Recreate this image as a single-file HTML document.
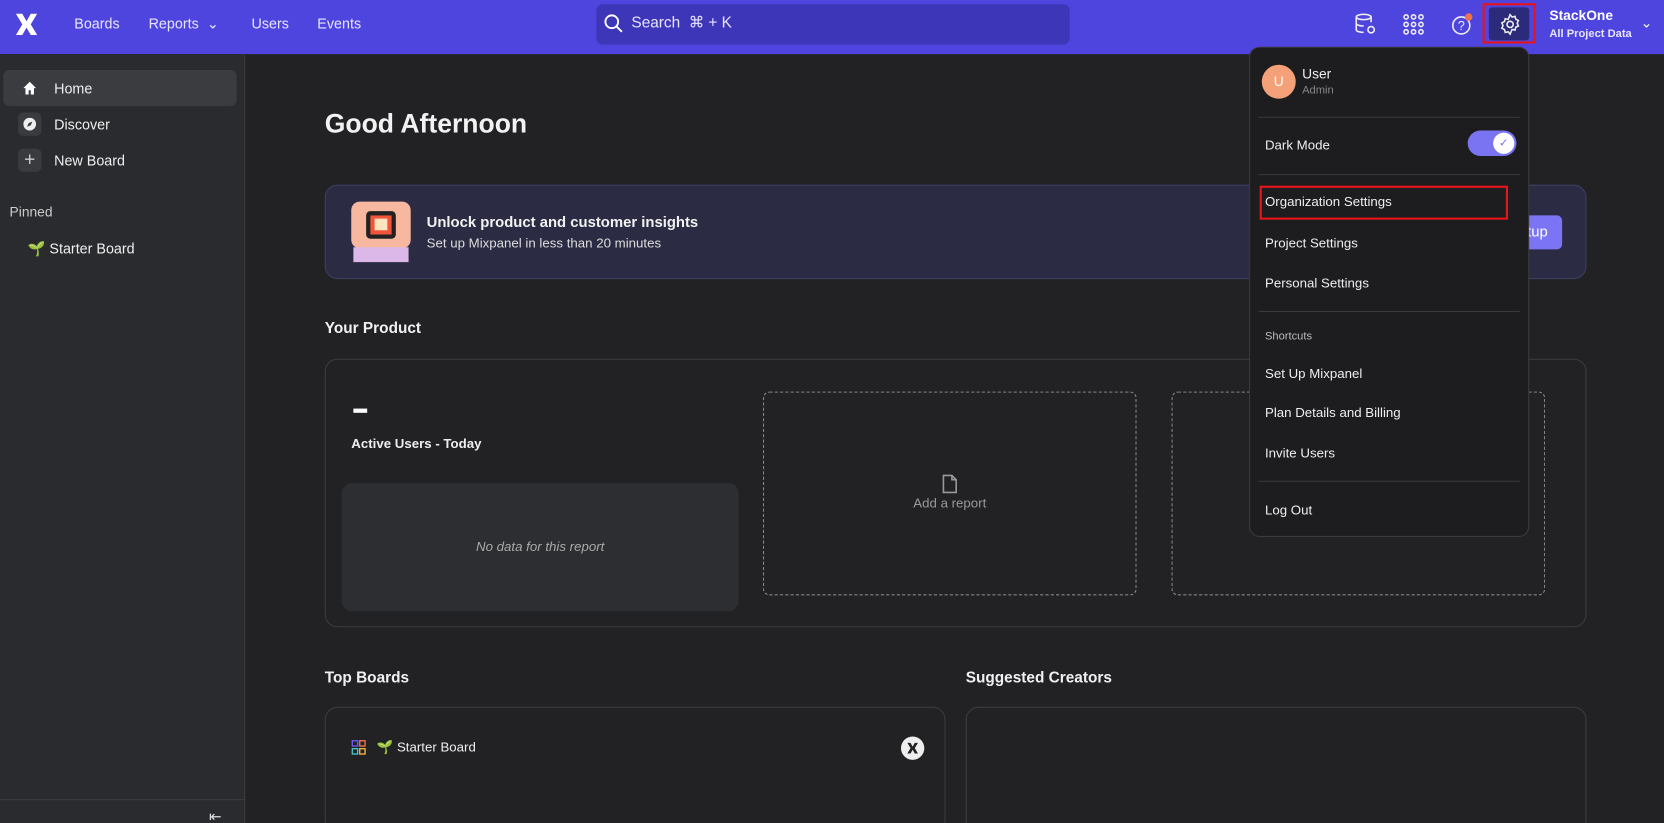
<!DOCTYPE html>
<html><head><meta charset="utf-8"><style>
*{box-sizing:border-box;margin:0;padding:0}
html,body{width:1664px;height:823px;overflow:hidden;background:#222225}
body{font-family:"Liberation Sans",sans-serif;color:#eee;position:relative}
#w{position:absolute;left:0;top:0;width:1568px;height:776px;transform:scale(1.06122);transform-origin:0 0;overflow:hidden}
.top{position:absolute;left:0;top:0;width:1568px;height:51px;background:#4e44de}
.nav{position:absolute;top:15px;font-size:13.5px;color:#e8e6ff}
.search{position:absolute;left:562px;top:4px;width:446px;height:38px;background:#3e36b8;border-radius:6px;color:#e8e6ff;font-size:14.5px;padding:10px 0 0 33px}
.side{position:absolute;left:0;top:51px;width:231px;height:725px;background:#2a2b2e;border-right:1px solid #3a3b3e}
.si{position:absolute;left:51px;font-size:13.5px;color:#eee}
.ib{position:absolute;left:17px;width:22px;height:22px;background:#3a3b3f;border-radius:5px}
.h2{position:absolute;font-size:14.5px;font-weight:bold;color:#f0f0f0}
.card{position:absolute;border:1px solid #3b3c40;border-radius:12px}
.dash{position:absolute;border:1px dashed #8a8a8e;border-radius:6px}
.menu{position:absolute;left:1177px;top:44px;width:264px;height:462px;background:#1d1d20;border:1px solid #3a3a3e;border-radius:10px}
.mi{position:absolute;left:14px;font-size:12.5px;color:#eee}
.sep{position:absolute;left:8px;width:246px;height:1px;background:#3a3a3e}
</style></head><body><div id="w">
<div class="top">
 <svg style="position:absolute;left:13px;top:11px" width="24" height="24" viewBox="0 0 24 24"><path d="M2 2h6l4 7 4-7h6l-6 10 6 10h-6l-4-7-4 7H2l6-10z" fill="#fff"/></svg>
 <div class="nav" style="left:70px">Boards</div>
 <div class="nav" style="left:140px">Reports &nbsp;⌄</div>
 <div class="nav" style="left:237px">Users</div>
 <div class="nav" style="left:299px">Events</div>
 <div class="search"><svg style="position:absolute;left:7px;top:9px" width="18" height="18" viewBox="0 0 18 18"><circle cx="7.5" cy="7.5" r="6" stroke="#fff" stroke-width="1.8" fill="none"/><path d="M12 12l5 5" stroke="#fff" stroke-width="1.8"/></svg>Search &nbsp;⌘ + K</div>
 <svg style="position:absolute;left:1276px;top:12px" width="22" height="22" viewBox="0 0 22 22" fill="none" stroke="#eee" stroke-width="1.5"><ellipse cx="9" cy="4" rx="7" ry="2.5"/><path d="M2 4v12c0 1.4 3 2.5 7 2.5M16 4v5M2 10c0 1.4 3 2.5 7 2.5"/><circle cx="16" cy="16" r="3"/></svg>
 <svg style="position:absolute;left:1322px;top:13px" width="20" height="20" viewBox="0 0 20 20" fill="none" stroke="#eee" stroke-width="1.5"><circle cx="3" cy="3" r="2"/><circle cx="10" cy="3" r="2"/><circle cx="17" cy="3" r="2"/><circle cx="3" cy="10" r="2"/><circle cx="10" cy="10" r="2"/><circle cx="17" cy="10" r="2"/><circle cx="3" cy="17" r="2"/><circle cx="10" cy="17" r="2"/><circle cx="17" cy="17" r="2"/></svg>
 <svg style="position:absolute;left:1367px;top:12px" width="22" height="22" viewBox="0 0 22 22"><circle cx="10" cy="12" r="8" stroke="#eee" stroke-width="1.5" fill="none"/><text x="10" y="16.5" font-size="12" text-anchor="middle" fill="#eee" font-family="Liberation Sans">?</text><circle cx="17" cy="4" r="3.5" fill="#f0714a"/></svg>
 <div style="position:absolute;left:1397px;top:3px;width:50px;height:38px;border:2px solid #e8141c"><div style="position:absolute;left:4px;top:2px;width:38px;height:31px;background:#2c2a7a;border-radius:3px"></div>
 <svg style="position:absolute;left:13px;top:7px" width="22" height="22" viewBox="0 0 24 24" fill="none" stroke="#eee" stroke-width="1.6"><circle cx="12" cy="12" r="3.2"/><path d="M12 2l2 2.5 3-.8.8 3 2.7 1.3-1.2 2.8 1.2 2.8-2.7 1.3-.8 3-3-.8L12 22l-2-2.5-3 .8-.8-3-2.7-1.3 1.2-2.8-1.2-2.8 2.7-1.3.8-3 3 .8z"/></svg></div>
 <div style="position:absolute;left:1460px;top:7px;font-size:13px;font-weight:bold;color:#fff">StackOne</div>
 <div style="position:absolute;left:1460px;top:26px;font-size:10.5px;font-weight:bold;color:#e8e6ff">All Project Data</div>
 <div style="position:absolute;left:1546px;top:14px;font-size:13px;color:#fff">⌄</div>
</div>
<div class="side">
 <div style="position:absolute;left:3px;top:15px;width:220px;height:34px;background:#3b3c40;border-radius:6px"></div>
 <svg style="position:absolute;left:21px;top:25px" width="14" height="14" viewBox="0 0 14 14"><path d="M7 1L1 7h2v6h3v-4h2v4h3V7h2z" fill="#fff"/></svg>
 <div class="si" style="top:25px">Home</div>
 <div class="ib" style="top:55px"><svg style="position:absolute;left:5px;top:5px" width="12" height="12"><circle cx="6" cy="6" r="6" fill="#eee"/><path d="M8.5 3.5L5 5 3.5 8.5 7 7z" fill="#3a3b3f"/></svg></div>
 <div class="si" style="top:59px">Discover</div>
 <div class="ib" style="top:89px;color:#ccc;font-size:18px;text-align:center;line-height:21px">+</div>
 <div class="si" style="top:93px">New Board</div>
 <div style="position:absolute;left:9px;top:141px;font-size:13px;color:#ccc">Pinned</div>
 <div class="si" style="left:26px;top:176px"><span style="color:#5db53b">🌱</span> Starter Board</div>
 <div style="position:absolute;left:0;top:702px;width:231px;height:1px;background:#3a3b3e"></div>
 <div style="position:absolute;left:197px;top:710px;font-size:14px;color:#ddd">⇤</div>
</div>
<div style="position:absolute;left:306px;top:103px;font-size:25px;font-weight:bold;color:#f2f2f2">Good Afternoon</div>
<div class="card" style="left:306px;top:174px;width:1189px;height:89px;background:#2b2c43;border-color:#3d3e60">
 <div style="position:absolute;left:24px;top:15px;width:56px;height:44px;background:#f8b8a0;border-radius:8px"><div style="position:absolute;left:14px;top:9px;width:28px;height:26px;background:#222;border-radius:4px"><div style="position:absolute;left:4px;top:4px;width:20px;height:18px;background:#f0543a"><div style="position:absolute;left:4px;top:3px;width:12px;height:11px;background:#ffe4c0"></div></div></div></div>
 <div style="position:absolute;left:26px;top:58px;width:52px;height:14px;background:#dcb8e8"></div>
 <div style="position:absolute;left:95px;top:26px;font-size:14px;font-weight:bold;color:#f2f2f2">Unlock product and customer insights</div>
 <div style="position:absolute;left:95px;top:47px;font-size:12.5px;color:#ddd">Set up Mixpanel in less than 20 minutes</div>
 <div style="position:absolute;left:1100px;top:28px;width:65px;height:32px;background:#7b75f5;border-radius:5px;color:#fff;font-size:14px;padding:7px 0 0 32px">tup</div>
</div>
<div class="h2" style="left:306px;top:302px">Your Product</div>
<div class="card" style="left:306px;top:338px;width:1189px;height:253px">
 <div style="position:absolute;left:26px;top:46px;width:13px;height:4px;background:#fff"></div>
 <div style="position:absolute;left:24px;top:72px;font-size:12.5px;font-weight:bold;color:#eee">Active Users - Today</div>
 <div style="position:absolute;left:15px;top:116px;width:374px;height:121px;background:#2d2e31;border-radius:10px;text-align:center;padding-top:53px;font-size:12.5px;font-style:italic;color:#aaa">No data for this report</div>
</div>
<div class="dash" style="left:719px;top:369px;width:352px;height:192px"><svg style="position:absolute;left:167px;top:77px" width="16" height="18" viewBox="0 0 16 18" fill="none" stroke="#999" stroke-width="1.5"><path d="M2 1h8l4 4v12H2zM10 1v4h4"/></svg><div style="position:absolute;width:100%;top:97px;text-align:center;font-size:12.5px;color:#999">Add a report</div></div>
<div class="dash" style="left:1104px;top:369px;width:352px;height:192px"></div>
<div class="h2" style="left:306px;top:631px">Top Boards</div>
<div class="h2" style="left:910px;top:631px">Suggested Creators</div>
<div class="card" style="left:306px;top:666px;width:585px;height:120px">
 <svg style="position:absolute;left:24px;top:30px" width="14" height="15" viewBox="0 0 14 15" fill="none" stroke-width="1.3"><rect x="1" y="1" width="5" height="5" stroke="#6a5cf0"/><rect x="8" y="1" width="5" height="5" stroke="#f0714a"/><rect x="1" y="8.5" width="5" height="5" stroke="#4cc0c0"/><rect x="8" y="8.5" width="5" height="5" stroke="#f0b040"/></svg>
 <div style="position:absolute;left:48px;top:30px;font-size:12.5px;color:#eee"><span style="color:#5db53b">🌱</span> Starter Board</div>
 <div style="position:absolute;left:542px;top:27px;width:22px;height:22px;border-radius:50%;background:#eee"><svg style="position:absolute;left:5px;top:5px" width="12" height="12" viewBox="0 0 24 24"><path d="M2 2h6l4 7 4-7h6l-6 10 6 10h-6l-4-7-4 7H2l6-10z" fill="#222"/></svg></div>
</div>
<div class="card" style="left:910px;top:666px;width:585px;height:120px"></div>
<div class="menu">
 <div style="position:absolute;left:11px;top:16px;width:32px;height:32px;border-radius:50%;background:#f4a078;color:#fff;font-size:13px;text-align:center;line-height:32px">U</div>
 <div style="position:absolute;left:49px;top:17px;font-size:13px;color:#eee">User</div>
 <div style="position:absolute;left:49px;top:34px;font-size:10.5px;color:#888">Admin</div>
 <div class="sep" style="top:65px"></div>
 <div class="mi" style="top:85px">Dark Mode</div>
 <div style="position:absolute;left:205px;top:78px;width:46px;height:24px;border-radius:12px;background:#7a74f2"><div style="position:absolute;left:24px;top:2px;width:20px;height:20px;border-radius:50%;background:#fff;color:#7a74f2;font-size:11px;text-align:center;line-height:20px">✓</div></div>
 <div class="sep" style="top:119px"></div>
 <div style="position:absolute;left:9px;top:130px;width:234px;height:32px;border:2px solid #e8141c"></div>
 <div class="mi" style="top:138px">Organization Settings</div>
 <div class="mi" style="top:177px">Project Settings</div>
 <div class="mi" style="top:215px">Personal Settings</div>
 <div class="sep" style="top:248px"></div>
 <div style="position:absolute;left:14px;top:266px;font-size:10.5px;color:#bbb">Shortcuts</div>
 <div class="mi" style="top:300px">Set Up Mixpanel</div>
 <div class="mi" style="top:337px">Plan Details and Billing</div>
 <div class="mi" style="top:375px">Invite Users</div>
 <div class="sep" style="top:408px"></div>
 <div class="mi" style="top:429px">Log Out</div>
</div>
</div></body></html>
